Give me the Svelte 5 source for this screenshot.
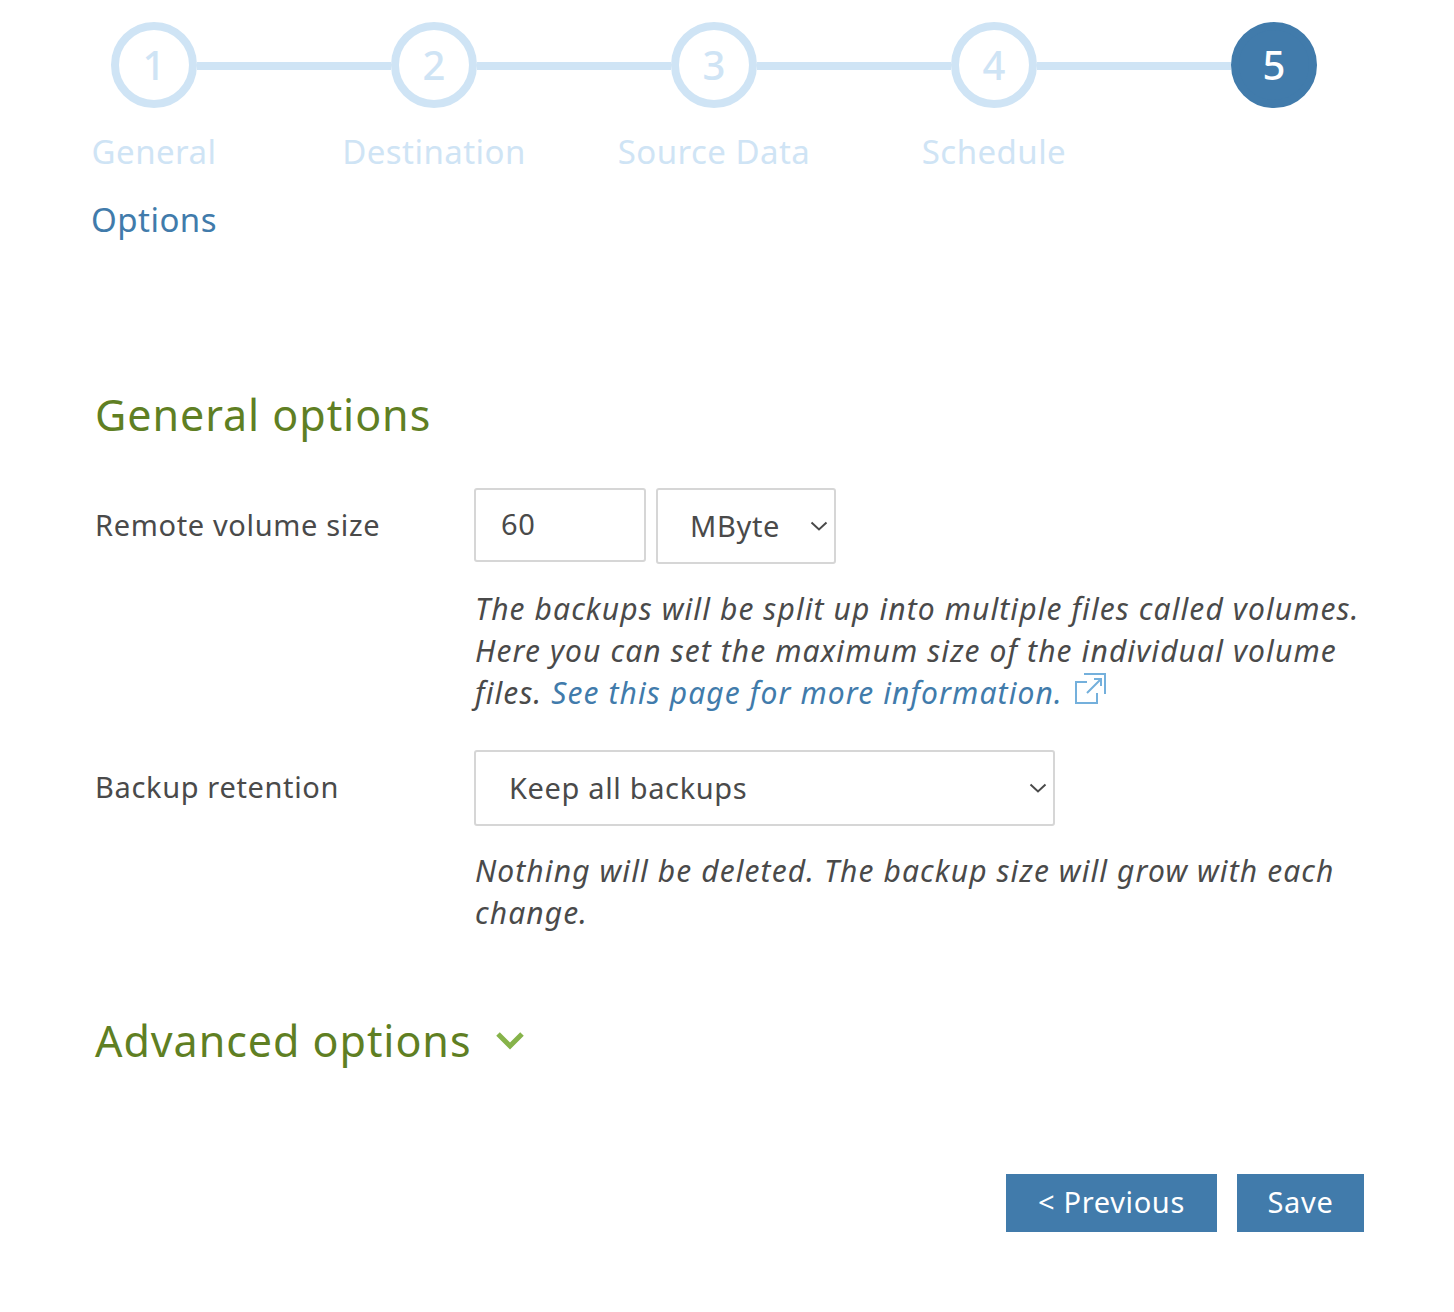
<script>
  const steps = [1, 2, 3, 4, 5];
  const labels = ['General', 'Destination', 'Source Data', 'Schedule', 'Options'];
  const current = 5;
</script>

<main class="page">
  <div class="steps">
    {#each steps as n, i}
      {#if i > 0}<span class="line"></span>{/if}
      <span class="circle" class:active={n === current}>{n}</span>
    {/each}
  </div>
  <div class="labels">
    {#each labels as label, i}
      <span class="label" class:active={i + 1 === current}>{label}</span>
    {/each}
  </div>

  <h2 class="general">General options</h2>

  <div class="field first">
    <span class="field-label">Remote volume size</span>
    <div class="field-body">
      <div class="controls">
        <input class="size" value="60" />
        <div class="select unit">
          <span>MByte</span>
          <svg width="18" height="10" viewBox="0 0 18 10"><path d="M1.500 1.500 9 8.500 16.500 1.500" /></svg>
        </div>
      </div>
      <p class="hint">The backups will be split up into multiple files called volumes. Here you can set the maximum size of the individual volume files. <a href="#more">See this page for more information.</a><svg class="ext" width="34" height="34" viewBox="0 0 34 34"><path d="M13 10H2V31H23V21M10 2H31V22M13 21 27 7M20 7H27V14" /></svg></p>
    </div>
  </div>

  <div class="field second">
    <span class="field-label">Backup retention</span>
    <div class="field-body">
      <div class="select retention">
        <span>Keep all backups</span>
        <svg width="18" height="10" viewBox="0 0 18 10"><path d="M1.500 1.500 9 8.500 16.500 1.500" /></svg>
      </div>
      <p class="hint">Nothing will be deleted. The backup size will grow with each change.</p>
    </div>
  </div>

  <h2 class="advanced">Advanced options
    <svg width="30" height="20" viewBox="0 0 30 20"><path d="M3 3 15 15 27 3" /></svg>
  </h2>

  <div class="buttons">
    <button class="prev">&lt; Previous</button>
    <button class="save">Save</button>
  </div>
</main>

<style>
  :global(body) {
    margin: 0;
    background: #fff;
  }
  .page {
    width: 1454px;
    height: 1312px;
    box-sizing: border-box;
    padding-top: 22px;
    font-family: "Noto Sans", sans-serif;
    color: #4a4a4a;
    font-size: 29px;
    letter-spacing: 0.65px;
  }
  .steps {
    display: flex;
    align-items: center;
    padding-left: 111px;
  }
  .circle {
    width: 86px;
    height: 86px;
    box-sizing: border-box;
    border: 8px solid #cfe4f5;
    border-radius: 50%;
    display: flex;
    align-items: center;
    justify-content: center;
    padding-bottom: 2px;
    color: #cfe4f5;
    font-size: 40px;
    font-weight: 500;
    letter-spacing: 0;
    flex: none;
  }
  .circle.active {
    background: #417bab;
    border-color: #417bab;
    color: #fff;
  }
  .line {
    width: 194px;
    height: 8px;
    margin-top: 2px;
    background: #cfe4f5;
    flex: none;
  }
  .labels {
    display: flex;
    flex-wrap: wrap;
    width: 1120px;
    margin: 20px 0 0 14px;
  }
  .label {
    width: 280px;
    height: 68px;
    line-height: 48px;
    text-align: center;
    color: #cfe4f5;
    font-size: 33px;
    font-weight: 400;
    letter-spacing: 0.45px;
  }
  .label.active {
    color: #417bab;
  }
  h2 {
    margin: 0 0 0 95px;
    font-size: 43px;
    font-weight: 400;
    line-height: 60px;
    color: #5f7f23;
    letter-spacing: 0.95px;
  }
  .general {
    margin-top: 121px;
  }
  .field {
    display: flex;
    margin-left: 94px;
  }
  .field.first {
    margin-top: 43px;
  }
  .field.second {
    margin-top: 36px;
  }
  .field-label {
    width: 379px;
    padding-left: 1px;
    flex: none;
    line-height: 73px;
  }
  .field-body {
    width: 891px;
  }
  .controls {
    display: flex;
    gap: 10px;
    align-items: flex-start;
  }
  .size {
    width: 172px;
    height: 74px;
    box-sizing: border-box;
    border: 2px solid #d6d6d6;
    border-radius: 3px;
    padding: 0 25px 3px;
    font: inherit;
    letter-spacing: inherit;
    color: inherit;
    outline: none;
  }
  .select {
    height: 76px;
    box-sizing: border-box;
    border: 2px solid #d6d6d6;
    border-radius: 3px;
    display: flex;
    align-items: center;
    justify-content: space-between;
    padding: 0 6px 2px 33px;
  }
  .unit {
    width: 180px;
    padding-left: 32px;
  }
  .retention {
    width: 581px;
  }
  .select svg {
    margin-top: 2px;
  }
  .select svg path {
    fill: none;
    stroke: #4a4a4a;
    stroke-width: 2;
  }
  .hint {
    margin: 24px 0 0;
    padding-left: 1px;
    font-size: 30px;
    font-style: italic;
    letter-spacing: 1.1px;
    line-height: 42px;
  }
  .hint a {
    color: #417bab;
    text-decoration: none;
  }
  .ext {
    margin-left: 11px;
    vertical-align: -2px;
  }
  .ext path {
    fill: none;
    stroke: #74b0dc;
    stroke-width: 2;
  }
  .advanced {
    margin-top: 77px;
    display: flex;
    align-items: center;
    gap: 24px;
  }
  .advanced svg path {
    fill: none;
    stroke: #86b34a;
    stroke-width: 5;
  }
  .buttons {
    display: flex;
    justify-content: flex-end;
    gap: 20px;
    width: 1364px;
    margin-top: 103px;
  }
  button {
    height: 58px;
    border: 0;
    background: #417bab;
    color: #fff;
    font: inherit;
    letter-spacing: inherit;
    padding: 0 0 3px;
  }
  .prev {
    width: 211px;
  }
  .save {
    width: 127px;
  }
</style>
